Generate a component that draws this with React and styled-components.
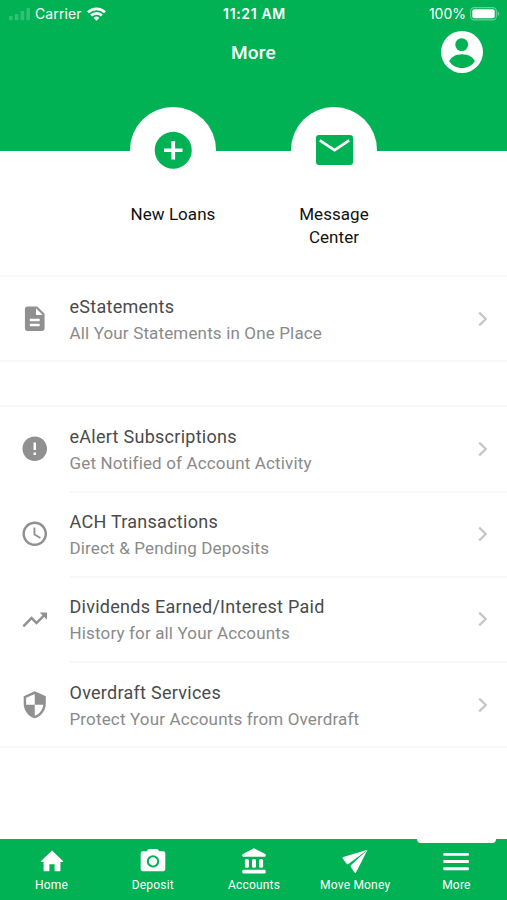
import React from "react";
import styled, { createGlobalStyle } from "styled-components";
import {
  MdDescription,
  MdError,
  MdAccessTime,
  MdTrendingUp,
  MdSecurity,
  MdAddCircle,
} from "react-icons/md";

const documents = [
  { icon: MdDescription, title: "eStatements", text: "All Your Statements in One Place" },
];

const services = [
  { icon: MdError, title: "eAlert Subscriptions", text: "Get Notified of Account Activity" },
  { icon: MdAccessTime, title: "ACH Transactions", text: "Direct & Pending Deposits" },
  { icon: MdTrendingUp, title: "Dividends Earned/Interest Paid", text: "History for all Your Accounts" },
  { icon: MdSecurity, title: "Overdraft Services", text: "Protect Your Accounts from Overdraft" },
];

const tabs = [
  { label: "Home", icon: HomeIcon },
  { label: "Deposit", icon: CameraIcon },
  { label: "Accounts", icon: BankIcon },
  { label: "Move Money", icon: PlaneIcon },
  { label: "More", icon: MenuIcon, active: true },
];

export default function App() {
  return (
    <Screen>
      <GlobalStyle />
      <Header>
        <StatusBar>
          <StatusSide>
            <SignalIcon />
            <Carrier>Carrier</Carrier>
            <WifiIcon />
          </StatusSide>
          <Time>11:21 AM</Time>
          <StatusSide $end>
            <span>100%</span>
            <BatteryIcon />
          </StatusSide>
        </StatusBar>
        <TitleBar>
          <h1>More</h1>
          <ProfileButton aria-label="Profile">
            <ProfileIcon />
          </ProfileButton>
        </TitleBar>
      </Header>
      <Actions>
        <Action>
          <Circle>
            <MdAddCircle size={44.5} />
          </Circle>
          <p>New Loans</p>
        </Action>
        <Action>
          <Circle>
            <MailIcon />
          </Circle>
          <p>
            Message
            <br />
            Center
          </p>
        </Action>
      </Actions>
      <List items={documents} />
      <List items={services} />
      <TabBar>
        {tabs.map(({ label, icon: Icon, active }) => (
          <Tab key={label} $active={active}>
            <Icon />
            <span>{label}</span>
          </Tab>
        ))}
      </TabBar>
    </Screen>
  );
}

function List({ items }) {
  return (
    <Group>
      {items.map(({ icon: Icon, title, text }) => (
        <Row key={title}>
          <RowIcon>
            <Icon size={29.5} />
          </RowIcon>
          <RowBody>
            <div>
              <h2>{title}</h2>
              <p>{text}</p>
            </div>
            <svg width="10" height="16" viewBox="0 0 10 16" fill="none">
              <path d="M1.2 1.6 7.8 8l-6.6 6.4" stroke="#c6c6c6" strokeWidth="2.2" />
            </svg>
          </RowBody>
        </Row>
      ))}
    </Group>
  );
}

function SignalIcon() {
  return (
    <svg width="22" height="14" viewBox="0 0 22 14" fill="#fff" opacity="0.2">
      <rect x="0" y="9" width="3.6" height="4.2" rx="1" />
      <rect x="5.8" y="7" width="3.6" height="6.2" rx="1" />
      <rect x="11.6" y="4" width="3.6" height="9.2" rx="1" />
      <rect x="17.4" y="1" width="3.6" height="12.2" rx="1" />
    </svg>
  );
}

function WifiIcon() {
  return (
    <svg width="19" height="14" viewBox="0 0 19 14" fill="none" stroke="#fff" strokeWidth="2.7">
      <path d="M1 5.3a12.2 12.2 0 0 1 17 0" />
      <path d="M4.1 8.5a7.8 7.8 0 0 1 10.8 0" />
      <path d="M9.5 13.8 6.6 10.9a4.2 4.2 0 0 1 5.8 0z" fill="#fff" stroke="none" />
    </svg>
  );
}

function BatteryIcon() {
  return (
    <svg width="30" height="14" viewBox="0 0 30 14">
      <rect x="0.6" y="0.6" width="25.8" height="12.3" rx="3.6" fill="none" stroke="#fff" strokeOpacity="0.4" strokeWidth="1.1" />
      <rect x="2.3" y="2.2" width="22.4" height="9.1" rx="2" fill="#fff" />
      <path d="M27.8 4.5c1.9.8 1.9 3.7 0 4.5z" fill="#fff" fillOpacity="0.45" />
    </svg>
  );
}

function ProfileIcon() {
  return (
    <svg width="42" height="42" viewBox="0 0 42 42">
      <circle cx="21" cy="21" r="21" fill="#fff" />
      <circle cx="20.7" cy="13.6" r="6.4" fill="#00b254" />
      <path d="M8.2 30.2C10 26 14.5 23.2 21 23.2S32 26 33.8 30.2C31 34.5 26.5 37 21 37S11 34.5 8.2 30.2z" fill="#00b254" />
    </svg>
  );
}

function MailIcon() {
  return (
    <svg width="37" height="30" viewBox="0 0 37 30">
      <rect width="37" height="30" rx="3" fill="#00b254" />
      <path d="M3.8 5.4 18.5 15.2 33.2 5.4" fill="none" stroke="#fff" strokeWidth="2.6" />
    </svg>
  );
}

function HomeIcon() {
  return (
    <svg width="26" height="26" viewBox="0 0 26 26" fill="#fff">
      <path d="M13 2.4 24 13.1c.4.4.2.9-.4.9h-2.2v8.2c0 .7-.4 1.1-1.1 1.1h-3.9c-.5 0-.8-.3-.8-.8v-6.3h-5.2v6.3c0 .5-.3.8-.8.8H5.7c-.7 0-1.1-.4-1.1-1.1V14H2.4c-.6 0-.8-.5-.4-.9z" />
    </svg>
  );
}

function CameraIcon() {
  return (
    <svg width="26" height="26" viewBox="0 0 26 26">
      <path d="M9.4 1h7.2c.6 0 1 .2 1.3.6l1.5 1.6h4c1.1 0 1.9.8 1.9 1.9v16.2c0 1.1-.8 1.9-1.9 1.9H2.6c-1.1 0-1.9-.8-1.9-1.9V5.1c0-1.1.8-1.9 1.9-1.9h4l1.5-1.6c.3-.4.7-.6 1.3-.6z" fill="#fff" />
      <circle cx="13" cy="13.4" r="5.2" fill="none" stroke="#00b254" strokeWidth="2" />
    </svg>
  );
}

function BankIcon() {
  return (
    <svg width="26" height="26" viewBox="0 0 26 26" fill="#fff">
      <path d="M13 .2 24.2 5.9c.9.5.8 2.8-.4 2.8H2.2c-1.2 0-1.3-2.3-.4-2.8z" />
      <rect x="3.9" y="11" width="4" height="8.8" rx="1.5" />
      <rect x="11" y="11" width="4" height="8.8" rx="1.5" />
      <rect x="18.1" y="11" width="4" height="8.8" rx="1.5" />
      <rect x="1.3" y="21.8" width="23.4" height="3.8" rx="1.3" />
    </svg>
  );
}

function PlaneIcon() {
  return (
    <svg width="26" height="26" viewBox="0 0 26 26" fill="#fff">
      <path d="M25.6 1.7 1.2 8.9c-.8.3-.9.9-.5 1.5l3.9 5.3c.5.7 1.1.8 1.8.3z" />
      <path d="M25.6 1.7 8.9 17.2c-.5.5-.5 1.1-.1 1.7l3.7 5.6c.5.6 1.2.6 1.5-.1z" />
    </svg>
  );
}

function MenuIcon() {
  return (
    <svg width="26" height="26" viewBox="0 0 26 26" fill="#fff">
      <rect x="0.3" y="4.9" width="25.6" height="2.9" rx="0.8" />
      <rect x="0.3" y="12.1" width="25.6" height="2.9" rx="0.8" />
      <rect x="0.3" y="19.3" width="25.6" height="2.9" rx="0.8" />
    </svg>
  );
}

const GlobalStyle = createGlobalStyle`
  * {
    box-sizing: border-box;
    margin: 0;
    padding: 0;
  }
  body {
    font-family: Roboto, "Liberation Sans", sans-serif;
    background-color: white;
  }
  svg {
    display: block;
    flex-shrink: 0;
  }
`;

const Screen = styled.div`
  display: flex;
  flex-direction: column;
  height: 900px;
  background-color: white;
  overflow: hidden;
`;

const Header = styled.header`
  height: 151px;
  flex-shrink: 0;
  color: white;
  background-color: #00b254;
`;

const StatusBar = styled.div`
  display: grid;
  grid-template-columns: 1fr auto 1fr;
  align-items: center;
  height: 27px;
  padding: 0 7px 0 9px;
  font-family: Inter, "Liberation Sans", sans-serif;
  font-size: 14px;
`;

const StatusSide = styled.div`
  display: flex;
  align-items: center;
  justify-content: ${(props) => (props.$end ? "flex-end" : "flex-start")};
  gap: 4px;
`;

const Carrier = styled.span`
  margin-right: 1px;
  letter-spacing: 0.1px;
`;

const Time = styled.span`
  font-weight: 600;
  letter-spacing: 0.65px;
`;

const TitleBar = styled.div`
  display: grid;
  grid-template-columns: 1fr auto 1fr;
  align-items: center;
  height: 50px;
  padding-right: 24px;
  h1 {
    grid-column: 2;
    padding-left: 24px;
    font-size: 19px;
    font-weight: 500;
    letter-spacing: 0.2px;
  }
`;

const ProfileButton = styled.button`
  justify-self: end;
  border: none;
  background: none;
`;

const Actions = styled.section`
  display: flex;
  justify-content: center;
  gap: 41px;
  height: 168px;
  flex-shrink: 0;
  margin-top: -44px;
`;

const Action = styled.div`
  display: flex;
  flex-direction: column;
  align-items: center;
  width: 120px;
  p {
    margin-top: 10px;
    color: #111;
    font-size: 17px;
    line-height: 22.5px;
    letter-spacing: 0.05px;
    text-align: center;
  }
`;

const Circle = styled.div`
  display: grid;
  place-items: center;
  width: 86px;
  height: 86px;
  flex-shrink: 0;
  border-radius: 50%;
  color: #00b254;
  background-color: white;
`;

const Group = styled.ul`
  border-top: 2px solid #f7f7f7;
  border-bottom: 2px solid #f7f7f7;
  list-style: none;
  & + & {
    margin-top: 43px;
  }
`;

const RowIcon = styled.div`
  display: grid;
  place-items: center;
  width: 69.5px;
  height: 83.25px;
  color: #909090;
`;

const RowBody = styled.div`
  display: flex;
  align-items: center;
  justify-content: space-between;
  flex: 1;
  height: 83.25px;
  padding-right: 19px;
  > div {
    padding-top: 2px;
  }
  h2 {
    color: #4a4a4a;
    font-size: 18px;
    font-weight: 400;
    line-height: 26px;
    letter-spacing: 0.27px;
  }
  p {
    color: #8a8a8a;
    font-size: 17px;
    line-height: 26px;
    letter-spacing: 0.15px;
  }
`;

const Row = styled.li`
  display: flex;
  &:not(:last-child) ${RowBody} {
    height: 85.25px;
    border-bottom: 2px solid #f7f7f7;
  }
`;

const TabBar = styled.nav`
  display: grid;
  grid-template-columns: repeat(5, 1fr);
  height: 61px;
  margin-top: auto;
  padding-left: 1px;
  flex-shrink: 0;
  background-color: #00b254;
`;

const Tab = styled.a`
  position: relative;
  display: flex;
  flex-direction: column;
  align-items: center;
  gap: 4px;
  padding-top: 9px;
  color: white;
  font-size: 12px;
  line-height: 14px;
  letter-spacing: 0.2px;
  &::before {
    content: "";
    display: ${(props) => (props.$active ? "block" : "none")};
    position: absolute;
    top: 0;
    width: 79px;
    height: 4px;
    border-radius: 0 0 4px 4px;
    background-color: white;
  }
`;
